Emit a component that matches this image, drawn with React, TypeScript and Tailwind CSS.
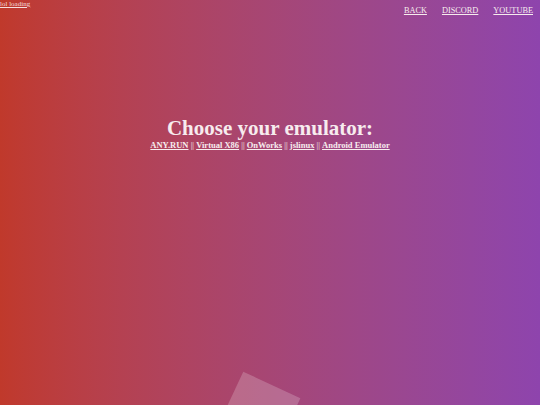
import React from "react";

const emulators = ["ANY.RUN", "Virtual X86", "OnWorks", "jslinux", "Android Emulator"];

export default function App() {
  return (
    <div
      className="relative h-[405px] w-[540px] overflow-hidden bg-gradient-to-r from-[#c0392b] to-[#8e44ad] text-[#f7ecee]"
      style={{ fontFamily: '"Liberation Serif", "Times New Roman", serif' }}
    >
      <a href="#" className="absolute left-0 top-0 text-[7px] leading-[8px] text-[#f6dede] underline">
        lol loading
      </a>

      <nav className="flex justify-end gap-[15px] pr-[7px] pt-[6px] text-[8.3px] leading-[10px]">
        <a href="#" className="underline">BACK</a>
        <a href="#" className="underline">DISCORD</a>
        <a href="#" className="underline">YOUTUBE</a>
      </nav>

      <div className="flex flex-col items-center pt-[100px]">
        <h1 className="text-[21px] font-bold leading-[24px]">Choose your emulator:</h1>
        <p className="text-[8.5px] leading-[11px]">
          {emulators.map((name, i) => (
            <React.Fragment key={name}>
              {i > 0 && " || "}
              <a href="#" className="font-bold underline">{name}</a>
            </React.Fragment>
          ))}
        </p>
      </div>

      <div className="absolute left-[227px] top-[382px] h-[63px] w-[63px] rotate-[25deg] bg-white/20" />
    </div>
  );
}
